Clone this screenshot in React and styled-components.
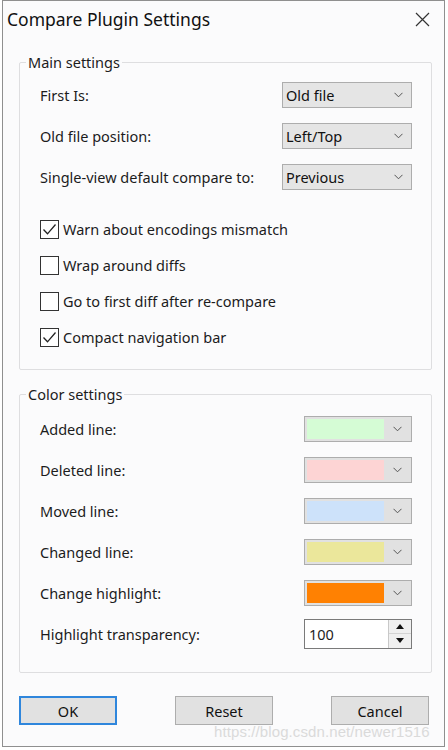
import React from 'react'
import styled, { createGlobalStyle } from 'styled-components';

const Global = createGlobalStyle`
  body {
    margin: 0;
    background: #ffffff;
    font-family: "Noto Sans", "Open Sans", sans-serif;
    color: #1c1c1c;
  }
`;

const Window = styled.div`
  position: relative;
  box-sizing: border-box;
  width: 443px;
  height: 747px;
  margin-left: 2px;
  border: 1px solid #8f8f8f;
  background: #fbfbfc;
  display: flex;
  flex-direction: column;
`;

const TitleBar = styled.div`
  display: flex;
  align-items: center;
  justify-content: space-between;
  height: 36px;
  padding: 0 14px 0 4px;
`;

const Title = styled.div`
  font-size: 17.5px;
  color: #111;
`;

const Close = styled.div`
  width: 15px;
  height: 15px;
  display: flex;
`;

const Group = styled.div`
  position: relative;
  margin: ${p => p.$top}px 12px 0 16px;
  border: 1px solid #dedee0;
  border-radius: 2px;
  padding: ${p => p.$padTop}px 19px ${p => p.$padBottom}px 20px;
`;

const GroupTitle = styled.div`
  position: absolute;
  top: -10px;
  left: 6px;
  padding: 0 2px;
  background: #fbfbfc;
  font-size: 14.5px;
  line-height: 18px;
`;

const SelectRows = styled.div`
  display: flex;
  flex-direction: column;
  gap: 15px;
`;

const Row = styled.div`
  display: flex;
  align-items: center;
  justify-content: space-between;
  height: ${p => p.$h || 26}px;
  font-size: 14.5px;
`;

const Select = styled.div`
  box-sizing: border-box;
  width: 130px;
  height: 26px;
  background: #e5e5e5;
  border: 1px solid #adadad;
  display: flex;
  align-items: center;
  justify-content: space-between;
  padding: 0 8px 0 3px;
  font-size: 14.5px;
  color: #111;
`;

const Checks = styled.div`
  margin-top: 21px;
  display: flex;
  flex-direction: column;
`;

const CheckRow = styled.div`
  display: flex;
  align-items: center;
  gap: 4px;
  height: 36px;
  font-size: 14.5px;
`;

const Box = styled.div`
  box-sizing: border-box;
  width: 19px;
  height: 19px;
  border: 1px solid #333;
  background: #fff;
  display: flex;
  align-items: center;
  justify-content: center;
`;

const ColorPick = styled.div`
  box-sizing: border-box;
  width: 108px;
  height: 26px;
  border: 1px solid #adadad;
  background: #e1e1e1;
  display: flex;
  align-items: stretch;
`;

const Swatch = styled.div`
  flex: 1;
  margin: 2px 0 2px 2px;
  background: ${p => p.$color};
`;

const Drop = styled.div`
  width: 27px;
  display: flex;
  align-items: center;
  justify-content: center;
`;

const Spinner = styled.div`
  box-sizing: border-box;
  width: 108px;
  height: 30px;
  border: 1px solid #7a7a7a;
  background: #fff;
  display: flex;
`;

const SpinValue = styled.div`
  flex: 1;
  padding: 4px 0 0 4px;
  font-size: 14.5px;
`;

const SpinButtons = styled.div`
  width: 22px;
  border-left: 1px solid #c8c8c8;
  display: flex;
  flex-direction: column;
`;

const SpinButton = styled.div`
  flex: 1;
  background: #f0f0f0;
  display: flex;
  align-items: center;
  justify-content: center;
  & + & {
    border-top: 1px solid #d4d4d4;
  }
`;

const Buttons = styled.div`
  display: flex;
  justify-content: space-between;
  margin: 23px 15px 0 16px;
`;

const Button = styled.div`
  box-sizing: border-box;
  width: 98px;
  height: 29px;
  background: #e1e1e1;
  border: ${p => p.$primary ? '2px solid #2f86dc' : '1px solid #adadad'};
  display: flex;
  align-items: center;
  justify-content: center;
  font-size: 14.5px;
  color: #111;
`;

const Watermark = styled.div`
  position: absolute;
  left: 211px;
  top: 722px;
  font-family: "Liberation Sans", Arial, sans-serif;
  font-size: 15px;
  color: #dadada;
  letter-spacing: 0.1px;
  white-space: nowrap;
`;

const Chevron = () => (
  <svg width="9" height="6" viewBox="0 0 9 6">
    <path d="M0.5 0.8 L4.5 4.8 L8.5 0.8" fill="none" stroke="#555" strokeWidth="1" />
  </svg>
);

const Tick = () => (
  <svg width="15" height="13" viewBox="0 0 15 13">
    <path d="M1.5 6.5 L5.5 10.8 L13.5 1.5" fill="none" stroke="#222" strokeWidth="1.3" />
  </svg>
);

const selects = [
  ['First Is:', 'Old file'],
  ['Old file position:', 'Left/Top'],
  ['Single-view default compare to:', 'Previous'],
];

const checks = [
  ['Warn about encodings mismatch', true],
  ['Wrap around diffs', false],
  ['Go to first diff after re-compare', false],
  ['Compact navigation bar', true],
];

const colors = [
  ['Added line:', '#d5fcd5'],
  ['Deleted line:', '#fdd4d4'],
  ['Moved line:', '#cde2fa'],
  ['Changed line:', '#ebe79b'],
  ['Change highlight:', '#ff8102'],
];

const App = () => {
  return (
    <Window>
      <Global />
      <TitleBar>
        <Title>Compare Plugin Settings</Title>
        <Close>
          <svg width="15" height="15" viewBox="0 0 15 15">
            <path d="M1 1 L14 14 M14 1 L1 14" stroke="#333" strokeWidth="1.2" />
          </svg>
        </Close>
      </TitleBar>

      <Group $top={25} $padTop={19} $padBottom={14}>
        <GroupTitle>Main settings</GroupTitle>
        <SelectRows>
          {selects.map(([label, value]) => (
            <Row key={label}>
              <span>{label}</span>
              <Select>
                <span>{value}</span>
                <Chevron />
              </Select>
            </Row>
          ))}
        </SelectRows>
        <Checks>
          {checks.map(([label, on]) => (
            <CheckRow key={label}>
              <Box>{on && <Tick />}</Box>
              <span>{label}</span>
            </CheckRow>
          ))}
        </Checks>
      </Group>

      <Group $top={24} $padTop={13} $padBottom={18}>
        <GroupTitle>Color settings</GroupTitle>
        {colors.map(([label, c]) => (
          <Row key={label} $h={41}>
            <span>{label}</span>
            <ColorPick>
              <Swatch $color={c} />
              <Drop><Chevron /></Drop>
            </ColorPick>
          </Row>
        ))}
        <Row $h={41}>
          <span>Highlight transparency:</span>
          <Spinner>
            <SpinValue>100</SpinValue>
            <SpinButtons>
              <SpinButton>
                <svg width="8" height="5" viewBox="0 0 8 5"><path d="M0 5 L4 0 L8 5 Z" fill="#111" /></svg>
              </SpinButton>
              <SpinButton>
                <svg width="8" height="5" viewBox="0 0 8 5"><path d="M0 0 L4 5 L8 0 Z" fill="#111" /></svg>
              </SpinButton>
            </SpinButtons>
          </Spinner>
        </Row>
      </Group>

      <Buttons>
        <Button $primary>OK</Button>
        <Button>Reset</Button>
        <Button>Cancel</Button>
      </Buttons>
      <Watermark>https://blog.csdn.net/newer1516</Watermark>
    </Window>
  )
}

export default App
